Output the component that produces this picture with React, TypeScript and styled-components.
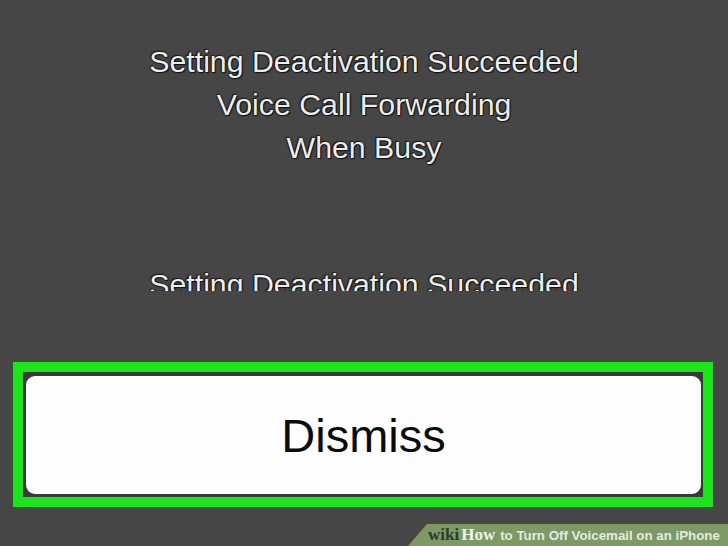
import React from "react";
import styled, { createGlobalStyle } from "styled-components";

const Global = createGlobalStyle`
  html, body { margin: 0; padding: 0; background: #464646; }
  body { width: 728px; height: 546px; overflow: hidden; }
`;

const Page = styled.div`
  width: 728px;
  height: 546px;
  display: flex;
  flex-direction: column;
  background: #464646;
  font-family: "Liberation Sans", Arial, sans-serif;
`;

const Messages = styled.div`
  height: 291px;
  overflow: hidden;
  padding-top: 40px;
  box-sizing: border-box;
  display: flex;
  flex-direction: column;
  align-items: center;
`;

const MessageBlock = styled.div<{ $gap?: number }>`
  margin-top: ${(p) => p.$gap ?? 0}px;
  display: flex;
  flex-direction: column;
  align-items: center;
`;

const Line = styled.div`
  font-size: 30.3px;
  line-height: 43px;
  color: #eeeeee;
  white-space: nowrap;
  text-shadow: 0 0 1px #000, 0 0 2px #111, 1px 1px 1px #151515, -1px -1px 1px #222;
`;

const Frame = styled.div`
  margin: 71px 15px 0 13px;
  height: 145px;
  box-sizing: border-box;
  border: 10px solid #1de41c;
  background: #3a3a3a;
  padding: 4px 2px 3px 3px;
  display: flex;
`;

const DismissButton = styled.div`
  flex: 1;
  background: #fdfdfd;
  border-radius: 9px;
  display: flex;
  align-items: center;
  justify-content: center;
  font-size: 47px;
  color: #0b0b0b;
`;

const BannerRow = styled.div`
  margin-top: 17px;
  display: flex;
  justify-content: flex-end;
`;

const Banner = styled.div`
  width: 320px;
  height: 22px;
  background: #7c9966;
  clip-path: polygon(19px 0, 100% 0, 100% 100%, 0 100%);
  display: flex;
  align-items: center;
  padding-left: 20px;
  box-sizing: border-box;
  white-space: nowrap;
  overflow: hidden;
`;

const Wiki = styled.span`
  font-family: "Liberation Serif", serif;
  font-weight: bold;
  font-size: 17px;
  color: #2e3a2a;
`;

const How = styled.span`
  font-family: "Liberation Serif", serif;
  font-weight: bold;
  font-size: 17px;
  color: #eef2e8;
  margin-left: 2px;
`;

const Title = styled.span`
  font-family: "Liberation Sans", Arial, sans-serif;
  font-weight: bold;
  font-size: 13.3px;
  color: #e4ebdc;
  margin-left: 5px;
`;

export default function App() {
  return (
    <>
      <Global />
      <Page>
        <Messages>
          <MessageBlock>
            <Line>Setting Deactivation Succeeded</Line>
            <Line>Voice Call Forwarding</Line>
            <Line>When Busy</Line>
          </MessageBlock>
          <MessageBlock $gap={94}>
            <Line>Setting Deactivation Succeeded</Line>
          </MessageBlock>
        </Messages>
        <Frame>
          <DismissButton>Dismiss</DismissButton>
        </Frame>
        <BannerRow>
          <Banner>
            <Wiki>wiki</Wiki>
            <How>How</How>
            <Title>to Turn Off Voicemail on an iPhone</Title>
          </Banner>
        </BannerRow>
      </Page>
    </>
  );
}
